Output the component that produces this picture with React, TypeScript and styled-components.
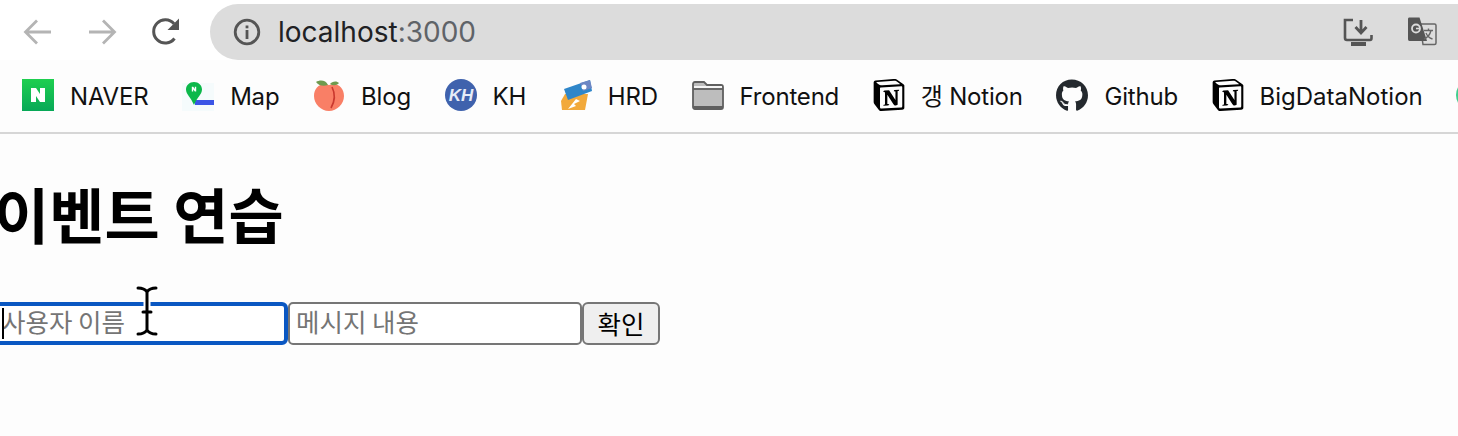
import React from "react";
import styled, { createGlobalStyle } from "styled-components";
import { SiNotion } from "react-icons/si";
import { FaGithub } from "react-icons/fa";

const GlobalStyle = createGlobalStyle`
  html, body {
    margin: 0;
    padding: 0;
    background: #fdfdfd;
    overflow: hidden;
  }
`;

const SANS = `Inter, "Noto Sans CJK KR", sans-serif`;
const KOREAN = `"Noto Sans CJK KR", "Liberation Sans", sans-serif`;

const Window = styled.div`
  width: 1458px;
  height: 436px;
  overflow: hidden;
  position: relative;
  background: #fdfdfd;
`;

const Toolbar = styled.div`
  height: 60px;
  display: flex;
  align-items: flex-start;
  background: #fff;
  box-sizing: border-box;
  padding: 4px 0 0 22px;
`;

const NavGroup = styled.div`
  display: flex;
  gap: 32px;
  margin-right: 28px;
  padding-top: 12px;
`;

const NavIcon = styled.svg`
  width: 32px;
  height: 32px;
  display: block;
`;

const Omnibox = styled.div`
  flex: 1;
  height: 56px;
  background: #dcdcdc;
  border-radius: 28px 0 0 28px;
  display: flex;
  align-items: center;
  padding: 0 20px 0 22px;
`;

const InfoIcon = styled.svg`
  width: 30px;
  height: 30px;
  flex: none;
`;

const Url = styled.div`
  margin-left: 16px;
  font: 400 28px ${SANS};
  color: #202124;
  flex: 1;
`;

const UrlPort = styled.span`
  color: #5f6368;
`;

const OmniActions = styled.div`
  display: flex;
  gap: 32px;
  align-items: center;
`;

const ActionIcon = styled.svg`
  width: 32px;
  height: 32px;
  display: block;
`;

const Bookmarks = styled.div`
  height: 74px;
  display: flex;
  align-items: center;
  gap: 33.7px;
  padding: 0 0 2px 22px;
  box-sizing: border-box;
  background: #fdfdfd;
  border-bottom: 2px solid #d6d6d6;
  white-space: nowrap;
`;

const Bookmark = styled.div`
  display: flex;
  align-items: center;
  gap: 16px;
  flex: none;
`;

const BookmarkIcon = styled.div`
  width: 32px;
  height: 32px;
  flex: none;
  display: flex;
  align-items: center;
  justify-content: center;

  svg {
    display: block;
  }
`;

const BookmarkLabel = styled.span<{ $tracking?: number }>`
  display: block;
  height: 32px;
  font: 400 24px/35px ${SANS};
  letter-spacing: ${(p) => p.$tracking ?? -0.2}px;
  color: #111;
`;

const Content = styled.main`
  margin-left: -6px;
  padding-top: 44px;
`;

const Title = styled.h1`
  margin: 0 0 54px;
  height: 70px;
  font: 700 60px/70px ${KOREAN};
  color: #000;
  white-space: nowrap;
`;

const Form = styled.form`
  display: flex;
  align-items: stretch;
  height: 43px;
`;

const Field = styled.div`
  position: relative;
  width: 294px;
`;

const TextInput = styled.input<{ $focused?: boolean }>`
  width: 100%;
  height: 100%;
  box-sizing: border-box;
  margin: 0;
  padding: 0 ${(p) => (p.$focused ? 4 : 6)}px 7px;
  border: ${(p) => (p.$focused ? "4px solid #0a57c2" : "2px solid #767676")};
  border-radius: ${(p) => (p.$focused ? 6 : 5)}px;
  background: #fff;
  font: 400 25.5px ${KOREAN};
  color: #000;
  outline: none;

  &::placeholder {
    color: #757575;
    opacity: 1;
  }
`;

const Caret = styled.span`
  position: absolute;
  left: 8px;
  top: 6px;
  width: 2px;
  height: 31px;
  background: #000;
`;

const TextCursor = styled.svg`
  position: absolute;
  left: 139px;
  top: -17px;
  width: 28px;
  height: 52px;
  pointer-events: none;
`;

const Submit = styled.button`
  width: 78px;
  margin: 0;
  padding: 0 0 7px;
  box-sizing: border-box;
  border: 2px solid #767676;
  border-radius: 6px;
  background: #efefef;
  font: 400 25.5px ${KOREAN};
  color: #000;
`;

const BackIcon = () => (
  <NavIcon viewBox="0 0 32 32" fill="none" stroke="#b4b4b4" strokeWidth="2.8">
    <path d="M29 16H4M15 4.500 3.500 16 15 27.500" />
  </NavIcon>
);

const ForwardIcon = () => (
  <NavIcon viewBox="0 0 32 32" fill="none" stroke="#b4b4b4" strokeWidth="2.8">
    <path d="M3 16h25M17 4.500 28.500 16 17 27.500" />
  </NavIcon>
);

const ReloadIcon = () => (
  <NavIcon viewBox="0 0 32 32" fill="none">
    <path d="M24.500 22.500A11.600 11.600 0 1 1 24 7.800" stroke="#555" strokeWidth="3" />
    <path d="M29 2.500V14H17.500Z" fill="#555" />
  </NavIcon>
);

const Info = () => (
  <InfoIcon viewBox="0 0 30 30" fill="none">
    <circle cx="15" cy="15" r="11.800" stroke="#555" strokeWidth="2.800" />
    <rect x="13.600" y="8.500" width="2.800" height="2.800" fill="#555" />
    <rect x="13.600" y="13" width="2.800" height="9" fill="#555" />
  </InfoIcon>
);

const InstallIcon = () => (
  <ActionIcon viewBox="0 0 32 32" fill="none">
    <path d="M11 4H3v18c0 1 .8 2 2 2h23c.8 0 1.500-.8 1.500-2v-3" stroke="#555" strokeWidth="2.600" />
    <rect x="9" y="26" width="15" height="4" fill="#555" />
    <path d="M19 4v12M13.500 11l5.500 6 5.500-6" stroke="#555" strokeWidth="2.800" />
  </ActionIcon>
);

const TranslateIcon = () => (
  <ActionIcon viewBox="0 0 32 32" fill="none">
    <path d="M14 8h14.500c.8 0 1.500.7 1.500 1.500V27c0 .8-.7 1.500-1.500 1.500H17z" fill="#dcdcdc" stroke="#666" strokeWidth="1.500" />
    <path d="M3.500 1.500h10L21 25H3.500C2.500 25 2 24 2 23V3c0-1 .6-1.500 1.500-1.500z" fill="#555" />
    <circle cx="10" cy="12.500" r="4" stroke="#dcdcdc" strokeWidth="1.800" />
    <path d="M10 12.500h4" stroke="#dcdcdc" strokeWidth="1.600" />
    <path d="M18 14.500h9M22.500 12.500v2M25 14.500c-1 4-3 7-7 8.500M20 17c1 2.500 3.500 5 6.500 6" stroke="#666" strokeWidth="1.400" />
  </ActionIcon>
);

const NaverIcon = () => (
  <svg width="32" height="32" viewBox="0 0 32 32">
    <defs>
      <linearGradient id="naverGreen" x1="0" y1="0" x2="0" y2="1">
        <stop offset="0" stopColor="#1ecf4f" />
        <stop offset="1" stopColor="#07a857" />
      </linearGradient>
    </defs>
    <rect width="32" height="32" fill="url(#naverGreen)" />
    <path d="M9 9h5l4 6V9h5v14h-5l-4-6v6H9z" fill="#fff" />
  </svg>
);

const MapIcon = () => (
  <svg width="32" height="32" viewBox="0 0 32 32">
    <rect y="4" width="32" height="28" fill="#f5fbfc" />
    <rect x="13" y="21" width="19" height="5" fill="#3b55e6" />
    <path d="M12 3c4.500 0 8 3.300 8 7.500 0 5-5 8-8 15.500-3-7.500-8-10.500-8-15.500C4 6.300 7.500 3 12 3z" fill="#0cb84a" />
    <path d="M9.800 7.800h1.400l1.600 2.200V7.800h1.400v4.600h-1.400l-1.600-2.200v2.200H9.800z" fill="#fff" />
  </svg>
);

const PeachIcon = () => (
  <svg width="32" height="32" viewBox="0 0 32 32">
    <path d="M16 6c8-3 15 2 15 11 0 8-7 15-15 15S1 25 1 17C1 8 8 3 16 6z" fill="#f97f66" />
    <path d="M3 3c4-2.500 10-2 12 3-4 1.500-9 1-12-3zM17 5c2-3 7-3.500 9-1-2 2.500-6 3-9 1z" fill="#6f9a4e" />
    <path d="M19 8c3 6 3 14-1 21" fill="none" stroke="#c9382e" strokeWidth="1.600" />
  </svg>
);

const KhIcon = () => (
  <svg width="32" height="32" viewBox="0 0 32 32">
    <circle cx="16" cy="16" r="16" fill="#3f62ad" />
    <text x="16" y="22" textAnchor="middle" fontFamily="Liberation Sans, sans-serif" fontWeight="700" fontStyle="italic" fontSize="17" fill="#e6ecf7">
      KH
    </text>
  </svg>
);

const HrdIcon = () => (
  <svg width="32" height="32" viewBox="0 0 32 32">
    <path d="M1 22 5 15h23l-3 16H2z" fill="#f2a93b" />
    <path d="M4 10 30 1l2 11-24 9z" fill="#2f86c9" />
    <path d="M20 4l10-3 2 8-9 3z" fill="#6c86c4" />
    <path d="M8 30l8-10 4 2-6 3 2 2z" fill="#fff" />
    <circle cx="24" cy="8" r="2.500" fill="#fff" />
  </svg>
);

const FolderIcon = () => (
  <svg width="32" height="32" viewBox="0 0 32 32">
    <path d="M1 5c0-1 .7-2 2-2h9l3 3h14c1.200 0 2 .8 2 2v20c0 1-.8 2-2 2H3c-1.300 0-2-1-2-2z" fill="#bdbdbd" stroke="#5f5f5f" strokeWidth="1.800" />
    <path d="M1 10h30" stroke="#5f5f5f" strokeWidth="1.800" />
    <path d="M2 7h28v2H2z" fill="#f4f4f4" />
    <path d="M1 27h30v1c0 1-.8 2-2 2H3c-1.300 0-2-1-2-2z" fill="#5f5f5f" />
  </svg>
);

const NotionIcon = () => <SiNotion size={32} color="#000" />;

const GithubIcon = () => <FaGithub size={33} color="#24292e" />;

const PeekIcon = () => (
  <svg width="32" height="32" viewBox="0 0 32 32">
    <circle cx="16" cy="16" r="16" fill="#3ecf8e" />
  </svg>
);

const bookmarks = [
  { label: "NAVER", icon: <NaverIcon /> },
  { label: "Map", icon: <MapIcon /> },
  { label: "Blog", icon: <PeachIcon /> },
  { label: "KH", icon: <KhIcon /> },
  { label: "HRD", icon: <HrdIcon /> },
  { label: "Frontend", icon: <FolderIcon /> },
  { label: "갱 Notion", icon: <NotionIcon /> },
  { label: "Github", icon: <GithubIcon /> },
  { label: "BigDataNotion", icon: <NotionIcon />, tracking: 0 },
];

const App = () => {
  return (
    <Window>
      <GlobalStyle />
      <Toolbar>
        <NavGroup>
          <BackIcon />
          <ForwardIcon />
          <ReloadIcon />
        </NavGroup>
        <Omnibox>
          <Info />
          <Url>
            localhost<UrlPort>:3000</UrlPort>
          </Url>
          <OmniActions>
            <InstallIcon />
            <TranslateIcon />
          </OmniActions>
        </Omnibox>
      </Toolbar>
      <Bookmarks>
        {bookmarks.map((b) => (
          <Bookmark key={b.label}>
            <BookmarkIcon>{b.icon}</BookmarkIcon>
            <BookmarkLabel $tracking={b.tracking}>{b.label}</BookmarkLabel>
          </Bookmark>
        ))}
        <Bookmark>
          <BookmarkIcon>
            <PeekIcon />
          </BookmarkIcon>
        </Bookmark>
      </Bookmarks>
      <Content>
        <Title>이벤트 연습</Title>
        <Form onSubmit={(e) => e.preventDefault()}>
          <Field>
            <TextInput $focused placeholder="사용자 이름" readOnly />
            <Caret />
            <TextCursor viewBox="0 0 28 52" fill="none">
              <path d="M5 3c4 0 7 1 9 4 2-3 5-4 9-4M14 7v38M5 49c4 0 7-1 9-4 2 3 5 4 9 4M10 27h8" stroke="#fff" strokeWidth="7" strokeLinecap="round" />
              <path d="M5 3c4 0 7 1 9 4 2-3 5-4 9-4M14 7v38M5 49c4 0 7-1 9-4 2 3 5 4 9 4M10 27h8" stroke="#000" strokeWidth="3" strokeLinecap="round" />
            </TextCursor>
          </Field>
          <Field>
            <TextInput placeholder="메시지 내용" readOnly />
          </Field>
          <Submit type="submit">확인</Submit>
        </Form>
      </Content>
    </Window>
  );
};

export default App;
